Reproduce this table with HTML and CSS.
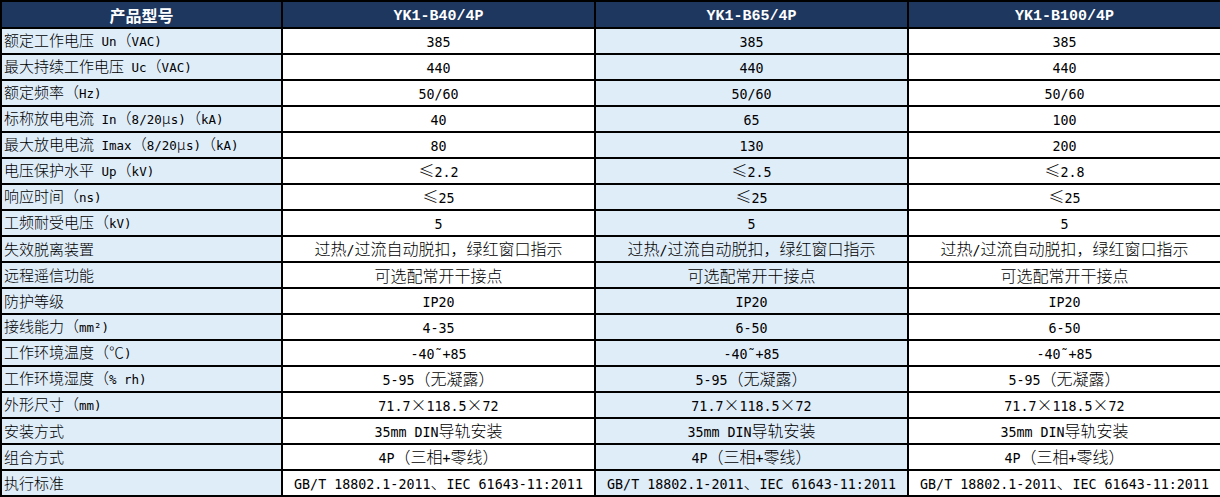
FILE: index.html
```html
<!DOCTYPE html>
<html lang="zh-CN">
<head>
<meta charset="utf-8">
<title>产品参数</title>
<link rel="stylesheet" href="styles.css">
</head>
<body>
<table class="spec">
  <colgroup>
    <col class="c-name">
    <col class="c-val">
    <col class="c-val">
    <col class="c-val">
  </colgroup>
  <thead>
    <tr class="head">
      <th>产品型号</th>
      <th><span class="l">YK1-B40/4P</span></th>
      <th><span class="l">YK1-B65/4P</span></th>
      <th><span class="l">YK1-B100/4P</span></th>
    </tr>
  </thead>
  <tbody>
    <tr><td>额定工作电压<span class="l"> Un</span>（<span class="l">VAC)</span></td><td><span class="l">385</span></td><td><span class="l">385</span></td><td><span class="l">385</span></td></tr>
    <tr><td>最大持续工作电压<span class="l"> Uc</span>（<span class="l">VAC)</span></td><td><span class="l">440</span></td><td><span class="l">440</span></td><td><span class="l">440</span></td></tr>
    <tr><td>额定频率（<span class="l">Hz)</span></td><td><span class="l">50/60</span></td><td><span class="l">50/60</span></td><td><span class="l">50/60</span></td></tr>
    <tr><td>标称放电电流<span class="l"> In</span>（<span class="l">8/20</span>μ<span class="l">s)</span>（<span class="l">kA)</span></td><td><span class="l">40</span></td><td><span class="l">65</span></td><td><span class="l">100</span></td></tr>
    <tr><td>最大放电电流<span class="l"> Imax</span>（<span class="l">8/20</span>μ<span class="l">s)</span>（<span class="l">kA)</span></td><td><span class="l">80</span></td><td><span class="l">130</span></td><td><span class="l">200</span></td></tr>
    <tr><td>电压保护水平<span class="l"> Up</span>（<span class="l">kV)</span></td><td>≤<span class="l">2.2</span></td><td>≤<span class="l">2.5</span></td><td>≤<span class="l">2.8</span></td></tr>
    <tr><td>响应时间（<span class="l">ns)</span></td><td>≤<span class="l">25</span></td><td>≤<span class="l">25</span></td><td>≤<span class="l">25</span></td></tr>
    <tr><td>工频耐受电压（<span class="l">kV)</span></td><td><span class="l">5</span></td><td><span class="l">5</span></td><td><span class="l">5</span></td></tr>
    <tr><td>失效脱离装置</td><td>过热<span class="l">/</span>过流自动脱扣，绿红窗口指示</td><td>过热<span class="l">/</span>过流自动脱扣，绿红窗口指示</td><td>过热<span class="l">/</span>过流自动脱扣，绿红窗口指示</td></tr>
    <tr><td>远程遥信功能</td><td>可选配常开干接点</td><td>可选配常开干接点</td><td>可选配常开干接点</td></tr>
    <tr><td>防护等级</td><td><span class="l">IP20</span></td><td><span class="l">IP20</span></td><td><span class="l">IP20</span></td></tr>
    <tr><td>接线能力（<span class="l">mm²)</span></td><td><span class="l">4-35</span></td><td><span class="l">6-50</span></td><td><span class="l">6-50</span></td></tr>
    <tr><td>工作环境温度（℃<span class="l">)</span></td><td><span class="l">-40˜+85</span></td><td><span class="l">-40˜+85</span></td><td><span class="l">-40˜+85</span></td></tr>
    <tr><td>工作环境湿度（<span class="l">% rh)</span></td><td><span class="l">5-95</span>（无凝露）</td><td><span class="l">5-95</span>（无凝露）</td><td><span class="l">5-95</span>（无凝露）</td></tr>
    <tr><td>外形尺寸（<span class="l">mm)</span></td><td><span class="l">71.7</span>×<span class="l">118.5</span>×<span class="l">72</span></td><td><span class="l">71.7</span>×<span class="l">118.5</span>×<span class="l">72</span></td><td><span class="l">71.7</span>×<span class="l">118.5</span>×<span class="l">72</span></td></tr>
    <tr><td>安装方式</td><td><span class="l">35mm DIN</span>导轨安装</td><td><span class="l">35mm DIN</span>导轨安装</td><td><span class="l">35mm DIN</span>导轨安装</td></tr>
    <tr><td>组合方式</td><td><span class="l">4P</span>（三相<span class="l">+</span>零线）</td><td><span class="l">4P</span>（三相<span class="l">+</span>零线）</td><td><span class="l">4P</span>（三相<span class="l">+</span>零线）</td></tr>
    <tr><td>执行标准</td><td><span class="l">GB/T 18802.1-2011</span>、<span class="l">IEC 61643-11:2011</span></td><td><span class="l">GB/T 18802.1-2011</span>、<span class="l">IEC 61643-11:2011</span></td><td><span class="l">GB/T 18802.1-2011</span>、<span class="l">IEC 61643-11:2011</span></td></tr>
  </tbody>
</table>
</body>
</html>
```

FILE: styles.css
```css
html, body {
  margin: 0;
  padding: 0;
  background: #ffffff;
}

.spec {
  width: 1220px;
  table-layout: fixed;
  border-collapse: collapse;
  font-family: "Noto Sans CJK SC", "DejaVu Sans Mono", sans-serif;
  font-size: 16px;
  color: #000000;
}

.c-name { width: 281px; }
.c-val { width: 313px; }

.spec th,
.spec td {
  border: 2px solid #000000;
  padding: 0 3px;
  text-align: center;
  vertical-align: middle;
  white-space: nowrap;
  overflow: hidden;
  line-height: 20px;
}

.spec td {
  font-weight: 300;
}

.l {
  font-family: "DejaVu Sans Mono", monospace;
  font-size: 13.33px;
  font-weight: 400;
}

.head th {
  height: 25px;
  background: #1e375f;
  color: #ffffff;
  font-weight: bold;
}

.head .l {
  font-family: "Liberation Mono", monospace;
  font-size: 15px;
  font-weight: bold;
}

.spec tbody td {
  height: 24px;
  background: #ffffff;
}

.spec tbody td:first-child {
  text-align: left;
  font-size: 15px;
  padding-left: 2px;
  background: #dfedf9;
}

.spec tbody td:first-child .l {
  font-size: 12.5px;
}

.spec tbody td:nth-child(3) {
  background: #dfedf9;
}
```
